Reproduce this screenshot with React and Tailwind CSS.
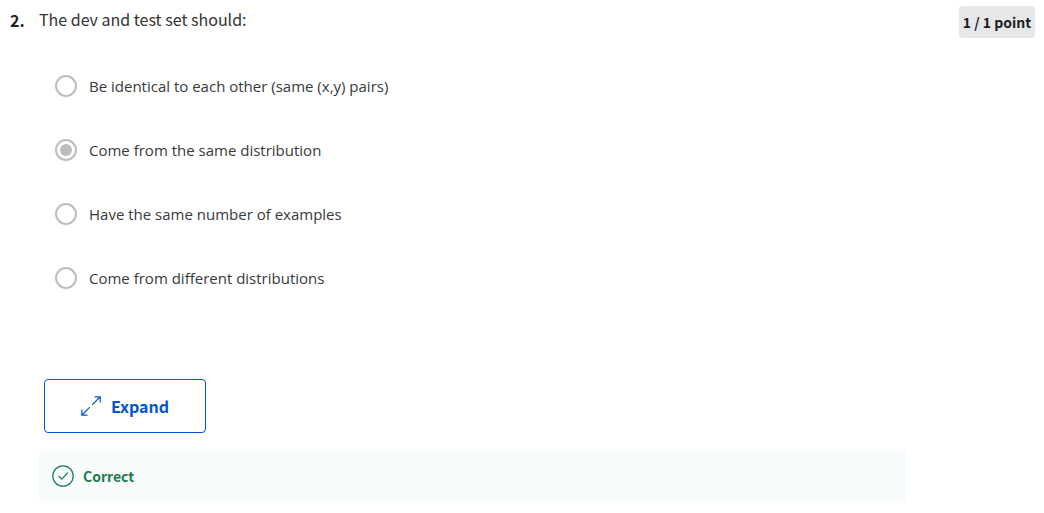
import React, { useState } from "react";

const OPTIONS = [
  "Be identical to each other (same (x,y) pairs)",
  "Come from the same distribution",
  "Have the same number of examples",
  "Come from different distributions",
];

function ExpandIcon() {
  return (
    <svg className="size-5" viewBox="0 0 20 20" fill="none" stroke="currentColor" strokeWidth="1.2" aria-hidden="true">
      <path d="M11.2 8.8 19 1M13.5 .8H19.2V6.5M8.8 11.2 1 19M.8 13.5V19.2H6.5" />
    </svg>
  );
}

function CorrectIcon() {
  return (
    <svg className="size-6" viewBox="0 0 24 24" fill="none" stroke="currentColor" strokeWidth="1.2" aria-hidden="true">
      <circle cx="12" cy="12" r="10.2" />
      <path d="M7.5 12 10.8 15.2 16.8 8.6" />
    </svg>
  );
}

export default function App() {
  const [selected, setSelected] = useState(1);

  return (
    <main className="flex items-start bg-white pt-1.5 pr-[9px] pb-3 pl-2.5 font-['Noto_Sans_CJK_SC',sans-serif] text-base text-[#1f1f1f]">
      <span className="w-[29px] shrink-0 text-base leading-7 font-bold">2.</span>
      <section className="min-w-0 flex-1">
        <fieldset>
          <legend className="text-base leading-[26px] text-[#333333]">The dev and test set should:</legend>
          <div className="flex flex-col gap-10 pt-[42px] pl-4">
            {OPTIONS.map((option, index) => (
              <label
                key={option}
                className="flex h-6 items-center gap-3 font-['Open_Sans',sans-serif] text-[15px] font-[370] text-[#373a3c]"
              >
                <input
                  type="radio"
                  name="answer"
                  checked={selected === index}
                  onChange={() => setSelected(index)}
                  className="size-[22px] shrink-0 appearance-none rounded-full border-2 border-[#bdbdbd] bg-white bg-clip-content p-[3px] checked:bg-[#bdbdbd]"
                />
                {option}
              </label>
            ))}
          </div>
        </fieldset>
        <button
          type="button"
          className="mt-[89px] ml-[5px] flex h-[54px] w-[162px] items-center justify-center gap-2.5 rounded border border-[#0056d2] text-base font-bold text-[#0056d2]"
        >
          <ExpandIcon />
          Expand
        </button>
        <div className="mt-[18px] flex h-[50px] items-center gap-2 bg-[#f7fbf9] px-3 text-sm font-bold text-[#1d7c50]" role="status">
          <CorrectIcon />
          Correct
        </div>
      </section>
      <div className="ml-[53px] flex h-8 w-[76px] shrink-0 items-center justify-center rounded bg-[#e5e7e8] text-sm font-bold whitespace-nowrap">
        1 / 1 point
      </div>
    </main>
  );
}
